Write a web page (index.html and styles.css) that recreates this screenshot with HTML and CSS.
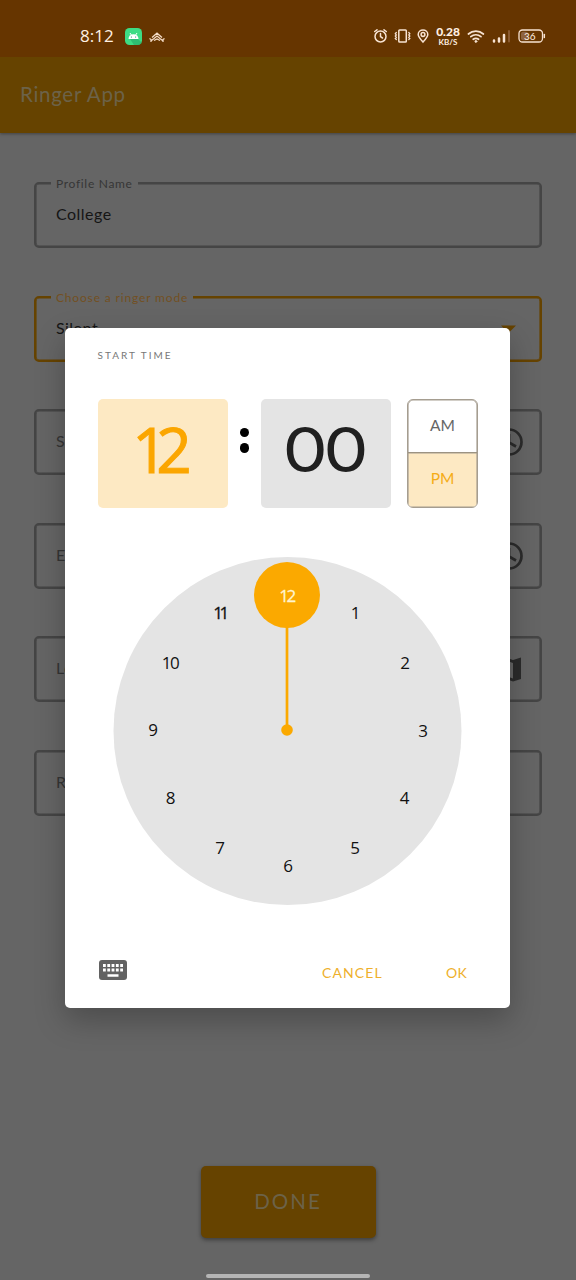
FILE: index.html
```html
<!DOCTYPE html>
<html lang="en">
<head>
<meta charset="utf-8">
<title>Ringer App</title>
<link rel="stylesheet" href="styles.css">
</head>
<body>
<div class="screen">
  <header class="status">
    <span class="clock">8:12</span>
    <svg class="android" width="17" height="17" viewBox="0 0 17 17"><rect width="17" height="17" rx="4.5" fill="#3ddc84"/><path d="M5 11h8l4 4-3 2H9z" fill="#25a866" opacity=".6"/><path d="M3.5 11a5 4.8 0 0 1 10 0z" fill="#fff"/><path d="M5 5l1.3 2M12 5l-1.3 2" stroke="#fff"/><circle cx="6.4" cy="9" r=".6" fill="#286"/><circle cx="10.6" cy="9" r=".6" fill="#286"/></svg>
    <svg class="house" width="16" height="11" viewBox="0 0 16 11" fill="none" stroke="#f5dcc6" stroke-width="1.3"><path d="M3 5.5L8 1.2l5 4.3M5 6.500L8 4l3 2.500M.5 6.500l1.500 1v2.500M15.500 6.500l-1.500 1v2.500M2.500 8.500L5 6.500M13.500 8.500L11 6.500M5 8.500l3-1.500 3 1.500"/></svg>
    <svg class="sysicons" width="186" height="24" viewBox="0 0 186 24" fill="none" stroke="#f8e3d2" stroke-width="1.5" stroke-linecap="round">
      <circle cx="10.500" cy="12.500" r="5.500"/><path d="M10.500 9.500v3.200l2 1.300M4.700 7.500L7 5.800M16.300 7.500L14 5.800"/>
      <rect x="28.800" y="6" width="7.500" height="12" rx=".8"/><path d="M26.300 8.500l-1 1.200 1 1.200-1 1.200 1 1.200-1 1.200 1 1M38.800 8.500l1 1.200-1 1.200 1 1.200-1 1.200 1 1.200-1 1" stroke-width="1.300"/>
      <path d="M53 18c-3.300-3.700-4.800-5.600-4.800-7.600a4.800 4.300 0 0 1 9.600 0c0 2-1.500 3.900-4.800 7.600z"/><circle cx="53" cy="10.500" r="1.900"/>
      <path d="M98.400 10a11.500 11.500 0 0 1 15 0M100.800 12.700a8 8 0 0 1 10.200 0M103.200 15.300a4.500 4.500 0 0 1 5.400 0" stroke-width="1.700"/><circle cx="105.900" cy="17.400" r="1" fill="#f8e3d2" stroke-width=".8"/>
      <path d="M124 16.500v1M129 14.500v3M134 11v6.500" stroke-width="2.500"/><path d="M139 7v10.500" stroke="#8a5a30" stroke-width="2"/>
      <rect x="149" y="6" width="23.500" height="12" rx="3.500" stroke-width="1.300"/><rect x="151" y="7.700" width="7" height="8.600" rx="2" fill="#8d6240" stroke="none"/><path d="M174.300 10.500v3"/>
    </svg>
    <div class="speed"><b>0.28</b><span>KB/S</span></div>
    <span class="battery">36</span>
  </header>
  <div class="appbar">Ringer App</div>
  <main class="form">
    <div class="field"><span class="label l1">Profile Name</span><span class="value v1">College</span></div>
    <div class="field active"><span class="label l2">Choose a ringer mode</span><span class="value v1">Silent</span><svg class="icon" width="20" height="20" viewBox="0 0 20 20"><path d="M2 6.500h15L9.500 14z" fill="#664300"/></svg></div>
    <div class="field"><span class="value">Start time</span><svg class="icon" width="30" height="30" viewBox="0 0 30 30" fill="none" stroke="#2b2b2b" stroke-width="2.700"><circle cx="15" cy="15" r="12.500"/><path d="M15 7v8.500l7 4"/></svg></div>
    <div class="field"><span class="value">End time</span><svg class="icon" width="30" height="30" viewBox="0 0 30 30" fill="none" stroke="#2b2b2b" stroke-width="2.700"><circle cx="15" cy="15" r="12.500"/><path d="M15 7v8.500l7 4"/></svg></div>
    <div class="field"><span class="value">Location</span><svg class="icon" width="30" height="30" viewBox="0 0 30 30" fill="#2b2b2b"><path fill-rule="evenodd" d="M27 3.500L19 6l-8-3-8 2.500V27l8-2.500 8 3 8-2.500V3.500zM19 24.500l-8-3V6l8 3z"/></svg></div>
    <div class="field"><span class="value">Repeat</span></div>
  </main>
  <div class="bottom"><div class="done">DONE</div><div class="homebar"></div></div>

  <section class="dialog">
    <div class="title">START TIME</div>
    <div class="time">
      <div class="box hour">12</div>
      <div class="colon"><i></i><i></i></div>
      <div class="box minute"><span>00</span></div>
      <div class="period"><div class="am">AM</div><div class="pm">PM</div></div>
    </div>
    <svg class="dial" width="349" height="349" viewBox="0 0 349 349">
      <circle cx="174.500" cy="174" r="174" fill="#e4e4e4"/>
      <path d="M174 173V60" stroke="#fba900" stroke-width="2.700"/>
      <circle cx="174" cy="173" r="5.800" fill="#fba900"/><circle cx="174" cy="38" r="33" fill="#fba900"/>
      <g class="nums">
        <text x="173.500" y="44.500" class="tight sel">12</text><text x="242.500" y="62">1</text><text x="292" y="112">2</text><text x="310" y="179.500">3</text><text x="291.500" y="247">4</text><text x="242" y="296.500">5</text><text x="175" y="315">6</text><text x="107" y="296.500">7</text><text x="57.500" y="247">8</text><text x="40" y="179">9</text><text x="57" y="112" class="ten">10</text><text x="106.500" y="62" class="eleven">11</text>
      </g>
    </svg>
    <div class="actions">
      <svg width="28" height="20" viewBox="0 0 28 20"><rect width="28" height="20" rx="3" fill="#626262"/><path d="M4 5.500h20M4 10h20" stroke="#fff" stroke-width="2.800" stroke-dasharray="2.800 1.500"/><path d="M8.500 15.500h11" stroke="#fff" stroke-width="2.500"/></svg>
      <span class="cancel">CANCEL</span><span class="ok">OK</span>
    </div>
  </section>
</div>
</body>
</html>
```
FILE: styles.css
```css
* { box-sizing: border-box; }
body { margin: 0; font-family: Lato, "Liberation Sans", sans-serif; }
.screen { position: relative; width: 576px; height: 1280px; overflow: hidden; background: #656565; display: flex; flex-direction: column; }
.status { height: 57px; background: #663500; display: flex; align-items: center; padding: 15px 0 0 80px; position: relative; color: #fff0e2; }
.clock { font-family: "Open Sans", sans-serif; font-size: 17px; letter-spacing: 0; margin-top: -1px; width: 45px; white-space: nowrap; }
.house { margin-left: 7px; margin-top: 2px; }
.sysicons { margin-left: 205px; flex: none; }
.speed { position: absolute; left: 435px; top: 26px; width: 26px; display: flex; flex-direction: column; align-items: center; font-weight: 700; }
.speed b { font-size: 12px; line-height: 12px; }
.speed span { font-size: 8px; line-height: 8px; }
.battery { position: absolute; left: 524px; top: 30px; font-size: 10px; line-height: 12px; }
.appbar { height: 76px; background: #664300; color: #6c6249; font-size: 20.5px; line-height: 75px; padding-left: 20px; letter-spacing: 0.7px; box-shadow: 0 1px 3px rgba(0, 0, 0, .35); }
.form { padding: 49px 34.400px 0; display: flex; flex-direction: column; gap: 47.6px; }
.field { position: relative; height: 66px; flex: none; border: 2px solid #454545; box-shadow: inset 0 0 0 .6px #454545; border-radius: 5px; display: flex; align-items: center; justify-content: space-between; padding: 0 16px 0 19.500px; color: #353535; font-size: 16px; letter-spacing: 0.5px; }
.value { padding-bottom: 3px; }
.active { border-color: #664300; box-shadow: inset 0 0 0 .6px #664300; }
.active .icon { margin-right: 5px; }
.v1 { color: #151515; }
.label { position: absolute; left: 14.500px; top: -8px; padding: 0 5px; background: #656565; font-size: 12px; line-height: 16px; color: #363636; white-space: nowrap; }
.l1 { letter-spacing: 0.7px; }
.l2 { color: #735022; letter-spacing: 0.85px; }
.bottom { margin-top: auto; display: flex; flex-direction: column; align-items: center; padding-bottom: 2px; }
.done { width: 175px; height: 72px; background: #664300; border-radius: 5px; color: #6c6249; font-size: 20.5px; line-height: 70px; letter-spacing: 2px; text-align: center; box-shadow: 0 2px 4px rgba(0, 0, 0, .4); }
.homebar { width: 164px; height: 4px; border-radius: 2px; background: #b5b5b5; margin-top: 36px; }
.dialog { position: absolute; left: 65px; top: 328px; width: 445px; height: 680px; background: #fff; border-radius: 5px; box-shadow: 0 12px 30px rgba(0, 0, 0, .25); padding: 21px 32px 0 32.5px; display: flex; flex-direction: column; }
.title { font-size: 10px; line-height: 13px; letter-spacing: 2px; color: #777; }
.time { margin-top: 36.5px; display: flex; height: 109px; }
.box { width: 130.5px; height: 109px; margin-top: .5px; border-radius: 5px; text-align: center; font-size: 62px; line-height: 100px; flex: none; }
.hour { font-family: "Open Sans", sans-serif; background: #fde9c3; color: #fba600; letter-spacing: -11.500px; padding-right: 13px; -webkit-text-stroke: 1px #fba600; }
.minute { background: #e4e4e4; color: #202020; font-family: Inter, sans-serif; line-height: 102px; padding-right: 7px; }
.minute span { display: inline-block; letter-spacing: -4px; padding-left: 2px; transform: scaleX(1.16); }
.colon { width: 32.500px; flex: none; display: flex; flex-direction: column; align-items: center; padding-top: 29px; gap: 6px; }
.colon i { width: 9.500px; height: 9.500px; border-radius: 50%; background: #000; }
.period { width: 71px; height: 109px; margin-left: 16px; flex: none; border: 1px solid #a59d90; box-shadow: inset 0 0 0 .6px #a59d90; border-radius: 6px; overflow: hidden; text-align: center; font-size: 15.500px; line-height: 51px; }
.am { height: 53px; border-bottom: 1.500px solid #9c9382; color: #666; }
.pm { height: 54px; background: #fde9c3; color: #f5ac15; box-shadow: inset 0 0 0 .6px #a59d90; }
.dial { margin: 49px 0 0 15.500px; flex: none; }
.nums { font-family: "Open Sans", sans-serif; font-size: 17px; text-anchor: middle; fill: #111; }
.tight { letter-spacing: -2.500px; }
.eleven { letter-spacing: -3.500px; stroke: #111; stroke-width: .3px; }
.ten { letter-spacing: -1.500px; }
.sel { fill: #fff4cf; stroke: #fff4cf; stroke-width: .3px; }
.actions { display: flex; align-items: center; margin-top: 53px; height: 22px; padding-left: 1.500px; font-size: 14px; color: #eeb02c; }
.cancel { margin: 5px 0 0 195px; width: 124px; letter-spacing: 1.1px; }
.ok { margin-top: 5px; letter-spacing: .3px; }
```
